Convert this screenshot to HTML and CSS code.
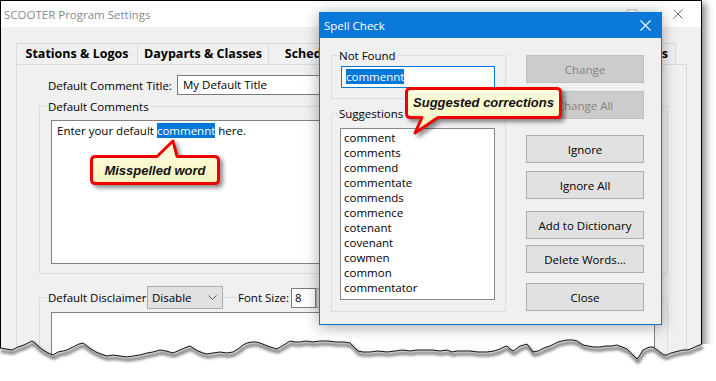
FILE: index.html
```html
<!DOCTYPE html>
<html lang="en">
<head>
  <meta charset="UTF-8" />
  <title>SCOOTER Program Settings</title>
  <link rel="stylesheet" href="styles.css">
</head>
<body>
  <div class="window">
    <div class="titlebar">
      <span class="title">SCOOTER Program Settings</span>
      <span class="max-btn"></span>
      <svg class="close-btn" width="10" height="10" viewBox="0 0 10 10"><path d="M0.5 0.5 L9.5 9.5 M9.5 0.5 L0.5 9.5" stroke="#707070" stroke-width="1" fill="none"/></svg>
    </div>
    <div class="window-body">
      <div class="tabs">
        <div class="tab tab-stations">Stations &amp; Logos</div>
        <div class="tab tab-dayparts">Dayparts &amp; Classes</div>
        <div class="tab tab-schedules">Schedules</div>
        <div class="tab tab-options">Display Options</div>
      </div>
      <div class="panel">
        <div class="field-row">
          <span class="field-label">Default Comment Title:</span>
          <div class="textinput title-input">My Default Title</div>
        </div>
        <div class="group comments-group">
          <div class="group-head"><span class="group-label">Default Comments</span></div>
          <div class="textbox comments-box">Enter your default <span class="sel">commennt</span> here.</div>
        </div>
        <div class="group disclaimer-group">
          <div class="group-head disclaimer-head">
            <span class="group-label disclaimer-label">Default Disclaimer</span>
            <div class="combo">
              <span>Disable</span>
              <svg width="9" height="5" viewBox="0 0 9 5"><path d="M0.5 0.5 L4.5 4.5 L8.5 0.5" stroke="#606060" fill="none"/></svg>
            </div>
            <span class="group-label size-label">Font Size:</span>
            <div class="textinput size-input">8</div>
            <div class="spin"></div>
          </div>
          <div class="textbox disclaimer-box"></div>
        </div>
      </div>
    </div>
  </div>

  <div class="dialog">
    <div class="dlg-titlebar">
      <span>Spell Check</span>
      <svg class="dlg-close" width="11" height="11" viewBox="0 0 11 11"><path d="M0.5 0.5 L10.5 10.5 M10.5 0.5 L0.5 10.5" stroke="#fff" stroke-width="1.1" fill="none"/></svg>
    </div>
    <div class="dlg-body">
      <div class="dlg-left">
        <div class="group notfound-group">
          <div class="group-head"><span class="group-label">Not Found</span></div>
          <div class="textinput word-input"><span class="sel">commennt</span></div>
        </div>
        <div class="group suggest-group">
          <div class="group-head"><span class="group-label">Suggestions</span></div>
          <ul class="listbox">
            <li>comment</li>
            <li>comments</li>
            <li>commend</li>
            <li>commentate</li>
            <li>commends</li>
            <li>commence</li>
            <li>cotenant</li>
            <li>covenant</li>
            <li>cowmen</li>
            <li>common</li>
            <li>commentator</li>
          </ul>
        </div>
      </div>
      <div class="dlg-buttons">
        <button class="btn" disabled>Change</button>
        <button class="btn gap-8" disabled>Change All</button>
        <button class="btn gap-16">Ignore</button>
        <button class="btn gap-8">Ignore All</button>
        <button class="btn gap-12">Add to Dictionary</button>
        <button class="btn gap-6">Delete Words...</button>
        <button class="btn gap-10">Close</button>
      </div>
    </div>
  </div>

  <div class="callout callout-misspelled">
    <svg width="140" height="56" viewBox="0 0 140 56">
      <defs>
        <linearGradient id="noteFill" x1="0" y1="0" x2="0" y2="1">
          <stop offset="0" stop-color="#ffffe0"/>
          <stop offset="1" stop-color="#f6f3c0"/>
        </linearGradient>
      </defs>
      <path d="M10.5 21.5 H72 L88 6 L92 21.5 H129.5 Q133.5 21.5 133.5 25.5 V44.5 Q133.5 48.5 129.5 48.5 H10.5 Q6.5 48.5 6.5 44.5 V25.5 Q6.5 21.5 10.5 21.5 Z" fill="url(#noteFill)" stroke="#ee0000" stroke-width="3" stroke-linejoin="round"/>
    </svg>
    <span class="callout-text">Misspelled word</span>
  </div>

  <div class="callout callout-suggested">
    <svg width="168" height="56" viewBox="0 0 168 56">
      <defs>
        <linearGradient id="noteFill2" x1="0" y1="0" x2="0" y2="1">
          <stop offset="0" stop-color="#ffffe0"/>
          <stop offset="1" stop-color="#f6f3c0"/>
        </linearGradient>
      </defs>
      <path d="M10.5 6.5 H156.5 Q160.5 6.5 160.5 10.5 V31.5 Q160.5 35.5 156.5 35.5 H38 L15 51 L22 35.5 H10.5 Q6.5 35.5 6.5 31.5 V10.5 Q6.5 6.5 10.5 6.5 Z" fill="url(#noteFill2)" stroke="#ee0000" stroke-width="3" stroke-linejoin="round"/>
    </svg>
    <span class="callout-text">Suggested corrections</span>
  </div>

  <svg class="torn-edge" width="716" height="51" viewBox="0 330 716 51">
    <defs>
      <filter id="tearBlur" x="-5%" y="-50%" width="110%" height="200%">
        <feGaussianBlur stdDeviation="1.6"/>
      </filter>
    </defs>
    <polygon fill="#fff" points="-2,348 0,348 6,349 12,350 18,347 24,345 28,343 32,341 35,343 39,347 43,350 48,353 53,355 58,352 63,351 67,350 71,348 75,346 79,344 83,343 87,346 91,349 96,352 101,354 107,356 113,355 120,356 127,357 133,356 140,355 147,353 153,352 160,350 166,351 173,353 180,350 187,347 190,346 193,348 198,351 203,353 207,354 213,353 220,352 227,353 233,352 238,349 243,345 247,343 252,342 256,342 260,343 265,345 270,347 277,349 282,346 287,343 290,341 295,342 300,342 306,341 313,342 320,341 328,341 336,342 344,342 350,343 353,346 356,349 358,351 363,352 370,352 378,351 387,352 395,351 403,350 410,351 417,350 425,350 433,350 440,351 447,350 452,352 457,351 463,351 470,351 478,352 487,352 494,351 500,349 504,347 507,346 510,349 513,351 516,349 520,346 524,345 527,344 530,348 533,352 538,351 544,348 550,346 554,344 558,342 562,341 567,340 573,340 577,341 580,343 583,345 588,346 594,347 600,347 606,346 612,346 617,345 622,347 627,349 631,353 634,356 637,359 640,355 643,350 647,348 650,347 653,347 657,350 661,353 664,355 667,355 671,353 675,352 679,351 683,350 688,350 693,348 697,346 700,345 702,344 716,344 716,382 -2,382"/>
    <polyline class="tear-shadow" filter="url(#tearBlur)" transform="translate(1,3)" points="0,348 6,349 12,350 18,347 24,345 28,343 32,341 35,343 39,347 43,350 48,353 53,355 58,352 63,351 67,350 71,348 75,346 79,344 83,343 87,346 91,349 96,352 101,354 107,356 113,355 120,356 127,357 133,356 140,355 147,353 153,352 160,350 166,351 173,353 180,350 187,347 190,346 193,348 198,351 203,353 207,354 213,353 220,352 227,353 233,352 238,349 243,345 247,343 252,342 256,342 260,343 265,345 270,347 277,349 282,346 287,343 290,341 295,342 300,342 306,341 313,342 320,341 328,341 336,342 344,342 350,343 353,346 356,349 358,351 363,352 370,352 378,351 387,352 395,351 403,350 410,351 417,350 425,350 433,350 440,351 447,350 452,352 457,351 463,351 470,351 478,352 487,352 494,351 500,349 504,347 507,346 510,349 513,351 516,349 520,346 524,345 527,344 530,348 533,352 538,351 544,348 550,346 554,344 558,342 562,341 567,340 573,340 577,341 580,343 583,345 588,346 594,347 600,347 606,346 612,346 617,345 622,347 627,349 631,353 634,356 637,359 640,355 643,350 647,348 650,347 653,347 657,350 661,353 664,355 667,355 671,353 675,352 679,351 683,350 688,350 693,348 697,346 700,345 702,344"/>
    <polyline class="tear-line" points="0,348 6,349 12,350 18,347 24,345 28,343 32,341 35,343 39,347 43,350 48,353 53,355 58,352 63,351 67,350 71,348 75,346 79,344 83,343 87,346 91,349 96,352 101,354 107,356 113,355 120,356 127,357 133,356 140,355 147,353 153,352 160,350 166,351 173,353 180,350 187,347 190,346 193,348 198,351 203,353 207,354 213,353 220,352 227,353 233,352 238,349 243,345 247,343 252,342 256,342 260,343 265,345 270,347 277,349 282,346 287,343 290,341 295,342 300,342 306,341 313,342 320,341 328,341 336,342 344,342 350,343 353,346 356,349 358,351 363,352 370,352 378,351 387,352 395,351 403,350 410,351 417,350 425,350 433,350 440,351 447,350 452,352 457,351 463,351 470,351 478,352 487,352 494,351 500,349 504,347 507,346 510,349 513,351 516,349 520,346 524,345 527,344 530,348 533,352 538,351 544,348 550,346 554,344 558,342 562,341 567,340 573,340 577,341 580,343 583,345 588,346 594,347 600,347 606,346 612,346 617,345 622,347 627,349 631,353 634,356 637,359 640,355 643,350 647,348 650,347 653,347 657,350 661,353 664,355 667,355 671,353 675,352 679,351 683,350 688,350 693,348 697,346 700,345 702,344"/>
  </svg>
</body>
</html>
```

FILE: styles.css
```css
html, body {
  margin: 0;
  overflow: hidden;
}
body {
  position: relative;
  width: 716px;
  height: 381px;
  background: #fff;
  font-family: "Open Sans", "Noto Sans", sans-serif;
  font-size: 11.5px;
  color: #000;
}

/* main settings window */
.window {
  box-sizing: border-box;
  width: 702px;
  height: 372px;
  border: 1px solid #000;
  background: #f0f0f0;
  box-shadow: 4px 3px 7px rgba(0,0,0,0.45);
  display: flex;
  flex-direction: column;
}
.titlebar {
  flex: none;
  height: 26px;
  background: #fff;
  display: flex;
  align-items: center;
  padding-left: 3px;
}
.title {
  color: #8a8a8a;
  font-size: 11.5px;
}
.max-btn {
  margin-left: auto;
  width: 10px;
  height: 10px;
  border: 1px solid #d0d0d0;
  box-sizing: border-box;
}
.close-btn {
  margin-left: 36px;
  margin-right: 18px;
}
.window-body {
  flex: 1;
  display: flex;
  flex-direction: column;
  padding: 16px 14px 0 15px;
}
.tabs {
  display: flex;
  height: 21px;
  margin-right: 11px;
}
.tab {
  box-sizing: border-box;
  height: 21px;
  border: 1px solid #d9d9d9;
  border-bottom: none;
  margin-left: -1px;
  font-size: 12.5px;
  font-weight: 700;
  line-height: 19px;
  text-align: center;
  white-space: nowrap;
  overflow: hidden;
}
.tab-stations { width: 122px; margin-left: 0; }
.tab-dayparts { width: 132px; }
.tab-schedules { width: 96px; }
.tab-options { flex: 1; text-align: right; padding-right: 7px; }

.panel {
  flex: 1;
  border: 1px solid #d9d9d9;
  padding-top: 10px;
}
.field-row {
  display: flex;
  align-items: center;
  height: 20px;
  padding-left: 31px;
  margin-right: 31px;
}
.field-label {
  width: 129px;
  flex: none;
}
.textinput {
  box-sizing: border-box;
  background: #fff;
  border: 1px solid #7a7a7a;
  height: 20px;
  line-height: 18px;
  padding-left: 5px;
}
.title-input { flex: 1; }

/* group boxes */
.group {
  border: 1px solid #dcdcdc;
  margin: 11px 18px 0 22px;
  padding-bottom: 9px;
}
.group-head {
  display: flex;
  align-items: center;
  height: 16px;
  margin-top: -8px;
  padding-left: 6px;
}
.group-label {
  background: #f0f0f0;
  padding: 0 2px;
  line-height: 16px;
  white-space: nowrap;
}
.textbox {
  box-sizing: border-box;
  background: #fff;
  border: 1px solid #828282;
  line-height: 17px;
  padding: 1px 5px;
}
.comments-box {
  margin: 5px 12px 0 11px;
  height: 144px;
}
.sel {
  background: #0078d7;
  color: #fff;
}
.disclaimer-group {
  margin-top: 23px;
  padding-bottom: 0;
  height: 80px;
}
.disclaimer-head {
  height: 23px;
  margin-top: -12px;
}
.disclaimer-label { width: 98px; box-sizing: border-box; }
.combo {
  box-sizing: border-box;
  width: 76px;
  height: 23px;
  margin-left: 3px;
  background: #e1e1e1;
  border: 1px solid #adadad;
  display: flex;
  align-items: center;
  justify-content: space-between;
  padding: 0 5px 0 4px;
}
.size-label {
  margin-left: 13px;
  width: 55px;
  box-sizing: border-box;
}
.size-input {
  width: 25px;
  padding-left: 3px;
}
.spin {
  width: 17px;
  height: 20px;
  box-sizing: border-box;
  border: 1px solid #adadad;
  background: #e1e1e1;
}
.disclaimer-box {
  margin: 3px 12px 0 11px;
  height: 60px;
}

/* spell check dialog */
.dialog {
  position: absolute;
  left: 319px;
  top: 12px;
  box-sizing: border-box;
  width: 343px;
  height: 313px;
  border: 1px solid #0a78d7;
  background: #f0f0f0;
  box-shadow: 0 2px 14px rgba(0,0,0,0.35);
}
.dlg-titlebar {
  height: 25px;
  background: #0a78d7;
  color: #fff;
  font-size: 11.5px;
  display: flex;
  align-items: center;
  padding-left: 4px;
}
.dlg-close {
  margin-left: auto;
  margin-right: 10px;
}
.dlg-body {
  display: flex;
  gap: 20px;
  padding: 17px 17px 0 11px;
}
.dlg-left {
  width: 175px;
  flex: none;
}
.dlg-left .group {
  margin: 0;
}
.dlg-left .group-head {
  padding-left: 5px;
}
.notfound-group {
  padding-bottom: 10px;
}
.word-input {
  width: 154px;
  height: 22px;
  margin: 2px 0 0 9px;
  border-color: #0078d7;
  padding-left: 4px;
  line-height: 20px;
}
.dlg-left .suggest-group {
  margin-top: 14px;
  padding-bottom: 11px;
}
.listbox {
  list-style: none;
  box-sizing: border-box;
  width: 155px;
  height: 172px;
  margin: 6px 0 0 8px;
  padding: 1px 0 0 3px;
  background: #fff;
  border: 1px solid #828790;
}
.listbox li {
  line-height: 15px;
}
.dlg-buttons {
  width: 118px;
  display: flex;
  flex-direction: column;
}
.btn {
  box-sizing: border-box;
  height: 28px;
  padding: 0;
  border: 1px solid #adadad;
  background: #e1e1e1;
  font: inherit;
  color: #000;
}
.btn:disabled {
  background: #cccccc;
  border-color: #bfbfbf;
  color: #838383;
}
.gap-6 { margin-top: 6px; }
.gap-8 { margin-top: 8px; }
.gap-10 { margin-top: 10px; }
.gap-12 { margin-top: 12px; }
.gap-16 { margin-top: 16px; }

/* annotation callouts */
.callout {
  position: absolute;
}
.callout svg {
  display: block;
  filter: drop-shadow(3px 3px 2px rgba(0,0,0,0.45));
}
.callout-text {
  position: absolute;
  display: flex;
  align-items: center;
  justify-content: center;
  font-family: "Liberation Sans", Arial, sans-serif;
  font-size: 13px;
  font-weight: 700;
  font-style: italic;
  color: #111;
}
.callout-misspelled {
  left: 85px;
  top: 135px;
}
.callout-misspelled .callout-text {
  left: 8px;
  top: 23px;
  width: 124px;
  height: 24px;
}
.callout-suggested {
  left: 400px;
  top: 82px;
}
.callout-suggested .callout-text {
  left: 8px;
  top: 8px;
  width: 151px;
  height: 25px;
}

/* torn bottom edge of the screenshot */
.torn-edge {
  position: absolute;
  left: 0;
  top: 330px;
}
.tear-shadow {
  fill: none;
  stroke: rgba(0,0,0,0.55);
  stroke-width: 3;
}
.tear-line {
  fill: none;
  stroke: #111;
  stroke-width: 1;
}
```
